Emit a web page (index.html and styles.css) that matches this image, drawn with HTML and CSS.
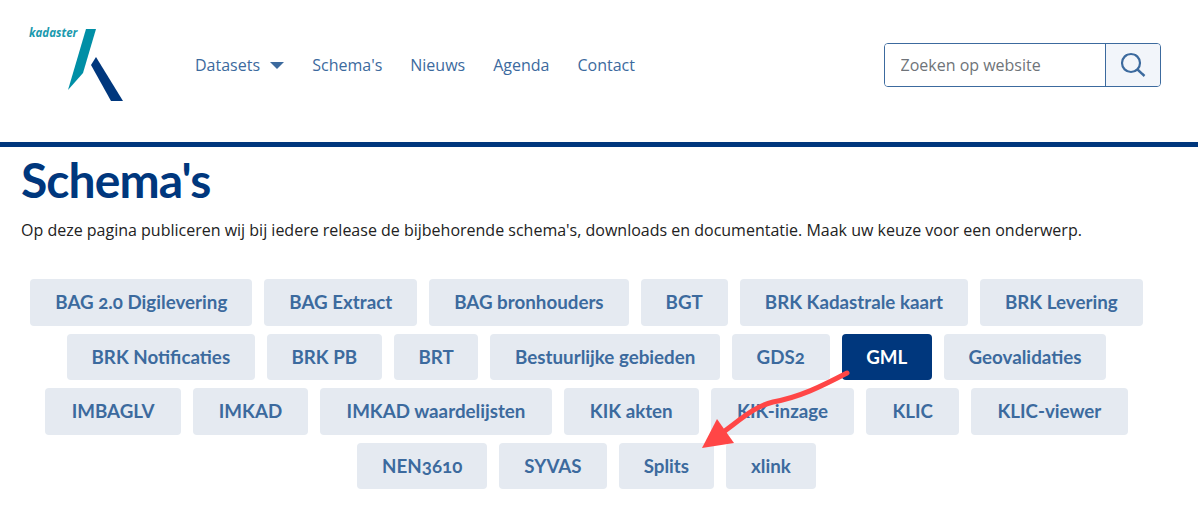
FILE: index.html
```html
<!DOCTYPE html>
<html lang="nl">
<head>
<meta charset="utf-8">
<title>Schema's</title>
<link rel="stylesheet" href="styles.css">
</head>
<body>
<header class="header">
  <a class="logo" href="#">
    <svg width="100" height="76" viewBox="0 0 100 76">
      <polygon points="59,0 69,0 56,44 41,61" fill="#008fa6"/>
      <polygon points="69,28 64,36 84,72 96,72" fill="#00377d"/>
    </svg>
    <span class="logo-text">kadaster</span>
  </a>
  <nav class="nav">
    <a href="#" class="nav-link">Datasets <span class="caret"></span></a>
    <a href="#" class="nav-link">Schema's</a>
    <a href="#" class="nav-link">Nieuws</a>
    <a href="#" class="nav-link">Agenda</a>
    <a href="#" class="nav-link">Contact</a>
  </nav>
  <form class="search">
    <input class="search-input" type="text" placeholder="Zoeken op website">
    <button class="search-btn" type="button" aria-label="Zoeken">
      <svg width="26" height="26" viewBox="0 0 26 26" fill="none" stroke="#3c6a9e">
        <circle cx="11" cy="11" r="9" stroke-width="2.2"/>
        <path d="M17.5 17.5l7 6.5" stroke-width="2.4"/>
      </svg>
    </button>
  </form>
</header>
<main class="main">
  <h1 class="title">Schema's</h1>
  <p class="intro">Op deze pagina publiceren wij bij iedere release de bijbehorende schema's, downloads en documentatie. Maak uw keuze voor een onderwerp.</p>
  <div class="tags">
    <div class="tag-row">
      <a class="tag" href="#">BAG 2.0 Digilevering</a>
      <a class="tag" href="#">BAG Extract</a>
      <a class="tag" href="#">BAG bronhouders</a>
      <a class="tag" href="#">BGT</a>
      <a class="tag" href="#">BRK Kadastrale kaart</a>
      <a class="tag" href="#">BRK Levering</a>
    </div>
    <div class="tag-row tag-row-snug">
      <a class="tag" href="#">BRK Notificaties</a>
      <a class="tag" href="#">BRK PB</a>
      <a class="tag" href="#">BRT</a>
      <a class="tag" href="#">Bestuurlijke gebieden</a>
      <a class="tag" href="#">GDS2</a>
      <a class="tag tag-active" href="#">GML</a>
      <a class="tag" href="#">Geovalidaties</a>
    </div>
    <div class="tag-row tag-row-wide">
      <a class="tag" href="#">IMBAGLV</a>
      <a class="tag" href="#">IMKAD</a>
      <a class="tag" href="#">IMKAD waardelijsten</a>
      <a class="tag" href="#">KIK akten</a>
      <a class="tag" href="#">KIK-inzage</a>
      <a class="tag" href="#">KLIC</a>
      <a class="tag" href="#">KLIC-viewer</a>
    </div>
    <div class="tag-row">
      <a class="tag" href="#">NEN3610</a>
      <a class="tag" href="#">SYVAS</a>
      <a class="tag" href="#">Splits</a>
      <a class="tag" href="#">xlink</a>
    </div>
  </div>
</main>
<svg class="arrow" width="1198" height="532" viewBox="0 0 1198 532" aria-hidden="true">
  <path d="M847 373C820 387 800 397 773 402C755 406 740 420 722 433" fill="none" stroke="#ff4646" stroke-width="5" stroke-linecap="round"/>
  <polygon points="702,448 717,419 734,443" fill="#ff4646"/>
</svg>
</body>
</html>
```
FILE: styles.css
```css
* { box-sizing: border-box; }
html, body { margin: 0; padding: 0; }
body {
  position: relative;
  width: 1198px;
  height: 532px;
  overflow: hidden;
  background: #fff;
  font-family: "Open Sans", sans-serif;
  font-size: 16px;
  color: #222;
}
a { text-decoration: none; }

.header {
  display: flex;
  align-items: flex-start;
  height: 147px;
  border-bottom: 5px solid #00377d;
  padding: 29px 37px 0 27px;
}
.logo { position: relative; display: block; width: 100px; height: 76px; flex: none; }
.logo svg { display: block; }
.logo-text {
  position: absolute;
  left: 2px;
  top: -4px;
  font-size: 11.5px;
  line-height: 16px;
  font-style: italic;
  font-weight: 700;
  color: #1b9aae;
}
.nav { display: flex; gap: 28px; margin: 25px 0 0 68px; }
.nav-link { color: #3c6a9e; font-size: 16px; line-height: 22px; white-space: nowrap; }
.caret {
  display: inline-block;
  margin-left: 6px;
  vertical-align: 2px;
  border-left: 7px solid transparent;
  border-right: 7px solid transparent;
  border-top: 7px solid #3c6a9e;
}
.search {
  display: flex;
  width: 277px;
  height: 44px;
  margin: 14px 0 0 auto;
  border: 1px solid #3c6a9e;
  border-radius: 4px;
  overflow: hidden;
}
.search-input {
  flex: 1;
  min-width: 0;
  border: 0;
  outline: 0;
  padding: 0 15.5px;
  font: 16px "Open Sans", sans-serif;
}
.search-input::placeholder { color: #6f7479; opacity: 1; }
.search-btn {
  width: 55px;
  flex: none;
  border: 0;
  border-left: 1px solid #3c6a9e;
  background: #f2f5fa;
  padding: 0;
  display: flex;
  align-items: center;
  justify-content: center;
}

.main { padding: 0 21px; }
.title {
  margin: 0;
  font-family: Lato, sans-serif;
  font-size: 48px;
  letter-spacing: -0.9px;
  line-height: 66px;
  font-weight: 700;
  color: #00377d;
}
.intro { margin: 6px 0 0; line-height: 22px; }
.tags {
  display: flex;
  flex-direction: column;
  gap: 8px;
  width: 1131px;
  margin-top: 38px;
}
.tag-row { display: flex; justify-content: center; gap: 12px; }
.tag {
  display: block;
  height: 46.5px;
  padding: 0 25px;
  border-radius: 4px;
  background: #e5eaf1;
  color: #3c6a9e;
  font-family: Lato, sans-serif;
  font-size: 18.75px;
  font-weight: 700;
  line-height: 46px;
  font-variant-numeric: oldstyle-nums;
  white-space: nowrap;
}
.tag-row-snug .tag { padding: 0 24.65px; }
.tag-row-wide .tag { padding: 0 26.2px; }
.tag-active { background: #00377d; color: #fff; }

.arrow { position: absolute; left: 0; top: 0; pointer-events: none; }
```
